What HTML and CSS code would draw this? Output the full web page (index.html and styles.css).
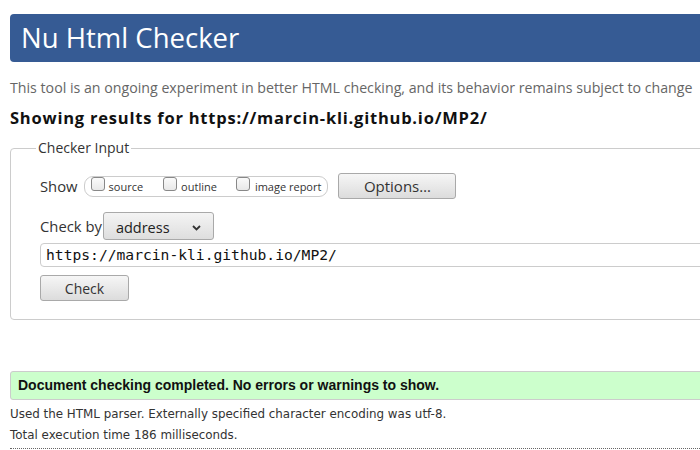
FILE: index.html
```html
<!DOCTYPE html>
<html>
<head>
<meta charset="utf-8">
<title>Nu Html Checker</title>
<link rel="stylesheet" href="styles.css">
</head>
<body>
<div class="page">
  <h1 class="masthead">Nu Html Checker</h1>
  <p class="intro">This tool is an ongoing experiment in better HTML checking, and its behavior remains subject to change</p>
  <h2 class="showing">Showing results for https://marcin-kli.github.io/MP2/</h2>
  <fieldset class="checker">
    <legend class="legend">Checker Input</legend>
    <div class="row show-row">
      <span class="label">Show</span>
      <span class="opts">
        <label class="opt"><span class="cb"></span><span>source</span></label>
        <label class="opt"><span class="cb"></span><span>outline</span></label>
        <label class="opt"><span class="cb"></span><span>image report</span></label>
      </span>
      <span class="btn btn-options">Options…</span>
    </div>
    <div class="row by-row">
      <span class="label">Check by</span>
      <span class="select">address
        <svg class="chev" width="9" height="6" viewBox="0 0 9 6"><path d="M1 1 L4.5 4.5 L8 1" fill="none" stroke="#333" stroke-width="1.8"/></svg>
      </span>
    </div>
    <div class="url">https://marcin-kli.github.io/MP2/</div>
    <div class="row check-row">
      <span class="btn btn-check">Check</span>
    </div>
  </fieldset>
  <p class="success">Document checking completed. No errors or warnings to show.</p>
  <div class="details">
    <p class="line">Used the HTML parser. Externally specified character encoding was utf-8.</p>
    <p class="line">Total execution time 186 milliseconds.</p>
  </div>
</div>
</body>
</html>
```

FILE: styles.css
```css
html, body {
  margin: 0;
  padding: 0;
  overflow: hidden;
  background: #fff;
}
body {
  width: 700px;
  height: 450px;
  font-family: "Open Sans", "Noto Sans", sans-serif;
  color: #222;
}
.page {
  width: 760px;
  padding: 14px 0 0 10px;
}
.masthead {
  margin: 0;
  height: 48px;
  line-height: 48px;
  background: #365b94;
  color: #fff;
  border-radius: 4px;
  padding-left: 11px;
  font-weight: normal;
  font-size: 27.5px;
}
.intro {
  margin: 16px 0 0;
  line-height: 20px;
  font-size: 14.2px;
  color: #666;
  white-space: nowrap;
}
.showing {
  margin: 10px 0 0;
  line-height: 20px;
  font-size: 16.5px;
  letter-spacing: 0.78px;
  font-weight: bold;
  color: #111;
  white-space: nowrap;
}
.checker {
  margin: 10px 0 0;
  border: 1px solid #ccc;
  border-radius: 4px;
  padding: 0 0 18px 29px;
}
.legend {
  margin-left: -4px;
  padding: 0 2px;
  line-height: 20px;
  font-size: 14px;
  color: #333;
}
.row {
  display: flex;
  align-items: center;
}
.show-row {
  margin-top: 15px;
  height: 26px;
}
.label {
  font-size: 14.8px;
  color: #333;
}
.opts {
  display: flex;
  align-items: center;
  margin-left: 6px;
  height: 19px;
  border: 1px solid #ccc;
  border-radius: 9px;
  padding: 0 6px 0 6px;
}
.opt {
  display: flex;
  align-items: center;
  font-size: 11px;
  color: #333;
  margin-right: 20px;
}
.opt:nth-child(2) { margin-right: 19px; }
.opt:last-child { margin-right: 0; }
.opt:last-child .cb { margin-right: 5px; }
.cb {
  box-sizing: border-box;
  width: 14px;
  height: 14px;
  border: 1px solid #888;
  border-radius: 3px;
  background: linear-gradient(#fafafa, #e8e8e8);
  margin-right: 4px;
  margin-top: -4px;
}
.btn {
  display: flex;
  align-items: center;
  justify-content: center;
  box-sizing: border-box;
  height: 26px;
  border: 1px solid #a9a9a9;
  border-radius: 3px;
  background: linear-gradient(#f6f6f6, #dcdcdc);
  font-size: 14px;
  color: #333;
}
.btn-options {
  margin-left: 10px;
  width: 118px;
  font-size: 15px;
}
.by-row {
  margin-top: 13px;
  height: 28px;
}
.select {
  margin-left: 1px;
  box-sizing: border-box;
  width: 111px;
  height: 28px;
  border: 1px solid #a9a9a9;
  border-radius: 3px;
  background: linear-gradient(#f4f4f4, #dedede);
  display: flex;
  align-items: center;
  padding: 2px 0 0 12px;
  font-size: 14.5px;
  color: #222;
  position: relative;
}
.chev {
  position: absolute;
  right: 12px;
  top: 12px;
}
.url {
  margin-top: 3px;
  box-sizing: border-box;
  height: 24px;
  border: 1px solid #ccc;
  border-radius: 4px;
  padding-left: 5px;
  font-family: "DejaVu Sans Mono", monospace;
  font-size: 14.65px;
  line-height: 22px;
  color: #111;
}
.check-row {
  margin-top: 8px;
}
.btn-check {
  width: 89px;
}
.success {
  margin: 51px 0 0;
  box-sizing: border-box;
  height: 29px;
  line-height: 27px;
  border: 1px solid #ccc;
  border-radius: 3px;
  background: #ccffcc;
  padding-left: 7px;
  font-family: "Liberation Sans", Arial, sans-serif;
  font-weight: bold;
  font-size: 14px;
  color: #111;
}
.details {
  margin-top: 4px;
  padding-bottom: 2px;
  border-bottom: 1px dotted #666;
}
.line {
  margin: 0;
  line-height: 21px;
  font-family: "DejaVu Sans", sans-serif;
  font-size: 11.9px;
  color: #333;
}
```
